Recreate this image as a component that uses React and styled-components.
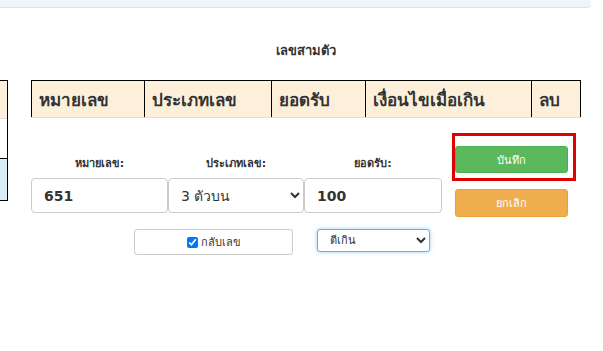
import React from 'react';
import styled, { createGlobalStyle } from 'styled-components';

const Global = createGlobalStyle`
  body {
    margin: 0;
    background: #fff;
    font-family: "DejaVu Sans", "Noto Sans", sans-serif;
    color: #333;
  }
`;

const TopBar = styled.div`
  width: 591px;
  height: 7px;
  background: #eef6fd;
  border-bottom: 1px solid #dbe3ea;
  border-bottom-right-radius: 4px;
`;

const Page = styled.div`
  display: flex;
  align-items: flex-start;
`;

const Side = styled.div`
  width: 7px;
  margin-top: 72px;
  border-right: 1px solid #000;
  border-top: 1px solid #000;
  border-bottom: 1px solid #000;
`;

const SideRow = styled.div`
  height: ${p => p.h}px;
  background: ${p => p.bg};
  border-bottom: 1px solid ${p => p.line};
`;

const Content = styled.div`
  width: 549px;
  margin-left: 23px;
`;

const Title = styled.div`
  padding-top: 35px;
  margin-bottom: 21px;
  line-height: 16px;
  text-align: center;
  font-size: 13px;
  font-weight: bold;
`;

const Table = styled.table`
  width: 549px;
  border-collapse: collapse;
  table-layout: fixed;
`;

const Th = styled.th`
  box-sizing: border-box;
  width: ${p => p.w}px;
  height: 37px;
  padding: 0 0 0 7px;
  text-align: left;
  background: #fdf0da;
  border: 1px solid #000;
  border-bottom: 1px solid #ddd;
  font-size: 17px;
  font-weight: bold;
  color: #333;
  white-space: nowrap;
`;

const Form = styled.div`
  display: flex;
  align-items: flex-start;
  padding-top: 28px;
`;

const Fields = styled.div`
  width: 411px;
  margin-top: 12px;
`;

const FieldRow = styled.div`
  display: grid;
  grid-template-columns: 137px 136px 138px;
`;

const Field = styled.div`
  display: flex;
  flex-direction: column;
`;

const Label = styled.label`
  font-size: 11px;
  line-height: 12px;
  font-weight: bold;
  text-align: center;
  margin-bottom: 8px;
`;

const Input = styled.input`
  box-sizing: border-box;
  height: 35px;
  width: 100%;
  padding: 0 12px;
  border: 1px solid #ccc;
  border-radius: 4px;
  font: bold 14px "DejaVu Sans", sans-serif;
  color: #333;
`;

const Select = styled.select`
  box-sizing: border-box;
  height: 35px;
  width: 100%;
  padding: 0 8px;
  border: 1px solid #ccc;
  border-radius: 4px;
  background: #fff;
  font: 14px "DejaVu Sans", sans-serif;
  color: #333;
`;

const OptionRow = styled.div`
  display: flex;
  align-items: flex-start;
  gap: 24px;
  margin-top: 16px;
  padding-left: 103px;
`;

const CheckBox = styled.label`
  box-sizing: border-box;
  width: 159px;
  height: 26px;
  display: flex;
  align-items: center;
  justify-content: center;
  gap: 3px;
  border: 1px solid #ccc;
  border-radius: 3px;
  font-size: 11px;
  input {
    margin: 0;
    width: 11px;
    height: 11px;
  }
`;

const SmallSelect = styled.select`
  box-sizing: border-box;
  width: 113px;
  height: 23px;
  padding: 0 8px;
  border: 1px solid #66afe9;
  border-radius: 3px;
  box-shadow: 0 0 4px rgba(102, 175, 233, 0.6);
  background: #fff;
  font: 11px "DejaVu Sans", sans-serif;
  color: #333;
`;

const Buttons = styled.div`
  width: 113px;
  margin-left: 13px;
  display: flex;
  flex-direction: column;
  gap: 16px;
`;

const Highlight = styled.div`
  position: relative;
  &::after {
    content: '';
    position: absolute;
    left: -3px;
    top: -13px;
    right: -8px;
    bottom: -8px;
    border: 3px solid #e00000;
  }
`;

const Button = styled.button`
  display: block;
  width: 113px;
  height: ${p => p.h}px;
  border: 1px solid ${p => p.edge};
  border-radius: 3px;
  background: ${p => p.bg};
  color: #fff;
  font: 11px "DejaVu Sans", sans-serif;
`;

const heads = [
  ['หมายเลข', 113],
  ['ประเภทเลข', 127],
  ['ยอดรับ', 94],
  ['เงื่อนไขเมื่อเกิน', 166],
  ['ลบ', 49],
];

export default function App() {
  return (
    <>
      <Global />
      <TopBar />
      <Page>
        <Side>
          <SideRow h={37} bg="#fdf0da" line="#ddd" />
          <SideRow h={39} bg="#fff" line="#000" />
          <SideRow h={40} bg="#d9edf7" line="transparent" />
        </Side>
        <Content>
          <Title>เลขสามตัว</Title>
          <Table>
            <thead>
              <tr>
                {heads.map(([t, w]) => (
                  <Th key={t} w={w}>{t}</Th>
                ))}
              </tr>
            </thead>
          </Table>
          <Form>
            <Fields>
              <FieldRow>
                <Field>
                  <Label>หมายเลข:</Label>
                  <Input defaultValue="651" />
                </Field>
                <Field>
                  <Label>ประเภทเลข:</Label>
                  <Select defaultValue="3top">
                    <option value="3top">3 ตัวบน</option>
                    <option value="3tod">3 ตัวโต๊ด</option>
                  </Select>
                </Field>
                <Field>
                  <Label>ยอดรับ:</Label>
                  <Input defaultValue="100" />
                </Field>
              </FieldRow>
              <OptionRow>
                <CheckBox>
                  <input type="checkbox" defaultChecked />
                  กลับเลข
                </CheckBox>
                <SmallSelect defaultValue="over">
                  <option value="over">ตีเกิน</option>
                  <option value="cut">ตัดทิ้ง</option>
                </SmallSelect>
              </OptionRow>
            </Fields>
            <Buttons>
              <Highlight>
                <Button h={27} bg="#5cb85c" edge="#4cae4c">บันทึก</Button>
              </Highlight>
              <Button h={28} bg="#f0ad4e" edge="#eea236">ยกเลิก</Button>
            </Buttons>
          </Form>
        </Content>
      </Page>
    </>
  );
}
